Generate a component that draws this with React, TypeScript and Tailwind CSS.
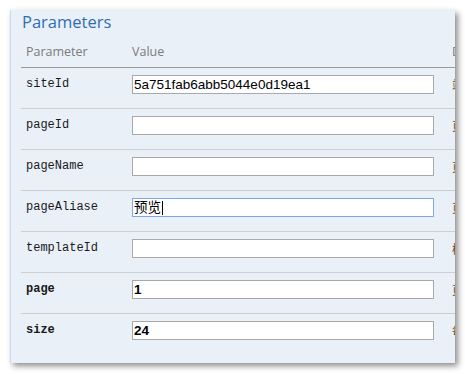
import React from 'react';

type Param = {
  name: string;
  value: string;
  bold?: boolean;
  focused?: boolean;
  desc: string;
};

const params: Param[] = [
  {name: 'siteId', value: '5a751fab6abb5044e0d19ea1', desc: '站点ID'},
  {name: 'pageId', value: '', desc: '页面ID'},
  {name: 'pageName', value: '', desc: '页面名称'},
  {name: 'pageAliase', value: '预览', focused: true, desc: '页面别名'},
  {name: 'templateId', value: '', desc: '模板ID'},
  {name: 'page', value: '1', bold: true, desc: '页码'},
  {name: 'size', value: '24', bold: true, desc: '每页记录数'},
];

const inputFont =
  "font-['Liberation_Sans','Noto_Sans_CJK_SC',sans-serif] text-[13.5px] text-black";

const ParamRow = ({param, first}: {param: Param; first: boolean}) => {
  return (
    <div
      className={`grid grid-cols-[106px_320px_200px] ${
        first ? 'h-[40px]' : 'h-[41px] border-t border-[#cfcfcf]'
      }`}>
      <div
        className={`pl-[5px] pt-[7px] font-['Liberation_Mono',monospace] text-[12px] leading-[19px] text-[#1a1a1a] ${
          param.bold ? 'font-bold' : ''
        }`}>
        {param.name}
      </div>
      <div className="pl-[5px] pt-[7px]">
        {param.focused ? (
          <div
            className={`flex h-[19px] w-[302px] items-center border border-[#7fa9e3] bg-white pl-[1px] leading-[17px] ${inputFont}`}>
            <span>{param.value}</span>
            <span className="ml-[1px] h-[14px] w-px bg-black" />
          </div>
        ) : (
          <input
            readOnly
            value={param.value}
            className={`block h-[19px] w-[302px] border border-[#a9a9a9] bg-white px-[1px] leading-[17px] outline-none ${inputFont} ${
              param.bold ? 'font-bold' : ''
            }`}
          />
        )}
      </div>
      <div className="pl-[5px] pt-[7px] font-['Noto_Sans_CJK_SC',sans-serif] text-[12px] leading-[19px] text-[#6b4a1c]">
        {param.desc}
      </div>
    </div>
  );
};

export default function App() {
  return (
    <div className="h-[374px] w-[465px] bg-white pl-[10px] pt-[10px]">
      <div className="h-[353px] w-[445px] overflow-hidden border-l border-[#c9dbef] bg-[#e9f0f8] pl-[10px] shadow-[3px_3px_6px_rgba(0,0,0,0.45)]">
        <div className="h-[20px] pl-[1px] pt-[1px] font-['Open_Sans',sans-serif] text-[16.5px] leading-[22px] text-[#2f6db5]">
          Parameters
        </div>
        <div className="grid h-[38px] w-[626px] grid-cols-[106px_320px_200px] items-center border-b border-[#9a9a9a] pt-[7px] font-['Open_Sans',sans-serif] text-[12.5px] text-[#7b7b7b]">
          <div className="pl-[5px]">Parameter</div>
          <div className="pl-[5px]">Value</div>
          <div className="pl-[5px]">Description</div>
        </div>
        <div className="w-[626px]">
          {params.map((p, i) => (
            <ParamRow key={p.name} param={p} first={i === 0} />
          ))}
        </div>
      </div>
    </div>
  );
}
